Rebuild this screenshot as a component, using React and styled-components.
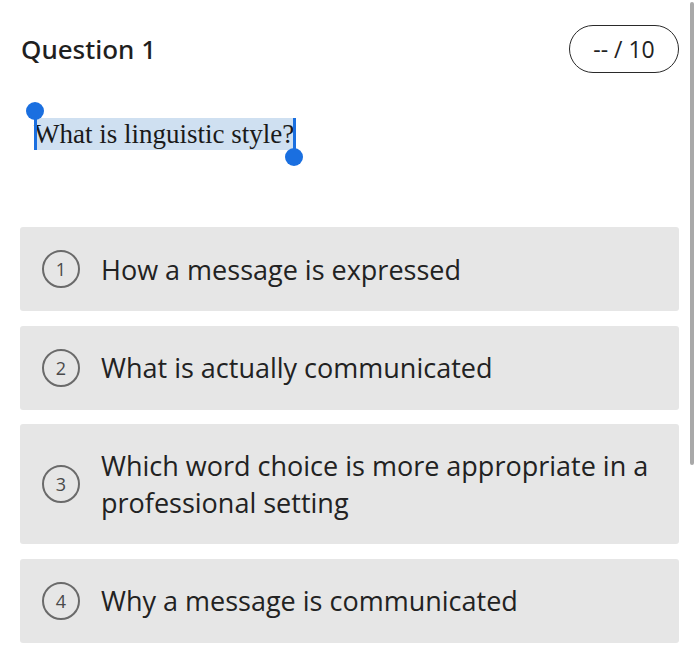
import React from "react";
import styled, { createGlobalStyle } from "styled-components";

const GlobalStyle = createGlobalStyle`
  html, body {
    margin: 0;
    padding: 0;
    background: #fff;
  }
  body {
    font-family: "Open Sans", "Liberation Sans", sans-serif;
    color: #222;
  }
`;

const Page = styled.div`
  position: relative;
  width: 700px;
  height: 667px;
  overflow: hidden;
  box-sizing: border-box;
  padding: 25px 21px 0 20px;
`;

const Header = styled.div`
  display: flex;
  align-items: center;
  justify-content: space-between;
  height: 48px;
`;

const Title = styled.div`
  font-family: "Noto Sans", "Open Sans", sans-serif;
  font-size: 26px;
  font-weight: 500;
  color: #1f1f1f;
  padding-left: 1px;
`;

const Points = styled.div`
  box-sizing: border-box;
  width: 110px;
  height: 48px;
  border: 1.5px solid #2a2a2a;
  border-radius: 24px;
  display: flex;
  align-items: center;
  justify-content: center;
  font-size: 23px;
  color: #222;
`;

const Prompt = styled.div`
  margin: 45px 0 0 14px;
  height: 109px;
`;

const Selected = styled.span`
  position: relative;
  display: inline-block;
  font-family: "Liberation Serif", "Times New Roman", serif;
  font-size: 27px;
  line-height: 32px;
  color: #1a1a1a;
  background: #cfe0f1;
  padding: 0 2px 0 0;
`;

const Handle = styled.span`
  position: absolute;
  width: 3px;
  height: 32px;
  top: 0;
  background: #1a6fe0;
  ${(p) => (p.$start ? "left: 0;" : "right: 0;")}

  &::after {
    content: "";
    position: absolute;
    width: 18px;
    height: 18px;
    border-radius: 50%;
    background: #1a6fe0;
    left: -8px;
    ${(p) => (p.$start ? "top: -16px;" : "bottom: -16px;")}
  }
`;

const Options = styled.div`
  display: flex;
  flex-direction: column;
  gap: 14.5px;
`;

const Option = styled.div`
  display: flex;
  align-items: center;
  gap: 21px;
  box-sizing: border-box;
  padding: 23px 20px 23px 22px;
  background: #e6e6e6;
  border-radius: 3px;
`;

const Num = styled.div`
  flex: none;
  box-sizing: border-box;
  width: 38px;
  height: 38px;
  border: 2px solid #6a6a6a;
  border-radius: 50%;
  display: flex;
  align-items: center;
  justify-content: center;
  font-size: 18px;
  color: #4a4a4a;
`;

const Label = styled.div`
  font-size: 27px;
  line-height: 37px;
  color: #222;
`;

const Scrollbar = styled.div`
  position: absolute;
  top: 2px;
  right: 6px;
  width: 4px;
  height: 463px;
  border-radius: 2px;
  background: #a9a9a9;
`;

const answers = [
  "How a message is expressed",
  "What is actually communicated",
  "Which word choice is more appropriate in a professional setting",
  "Why a message is communicated",
];

export default function App() {
  return (
    <>
      <GlobalStyle />
      <Page>
        <Header>
          <Title>Question 1</Title>
          <Points>-- / 10</Points>
        </Header>
        <Prompt>
          <Selected>
            <Handle $start />
            What is linguistic style?
            <Handle />
          </Selected>
        </Prompt>
        <Options>
          {answers.map((a, i) => (
            <Option key={i}>
              <Num>{i + 1}</Num>
              <Label>{a}</Label>
            </Option>
          ))}
        </Options>
        <Scrollbar />
      </Page>
    </>
  );
}
